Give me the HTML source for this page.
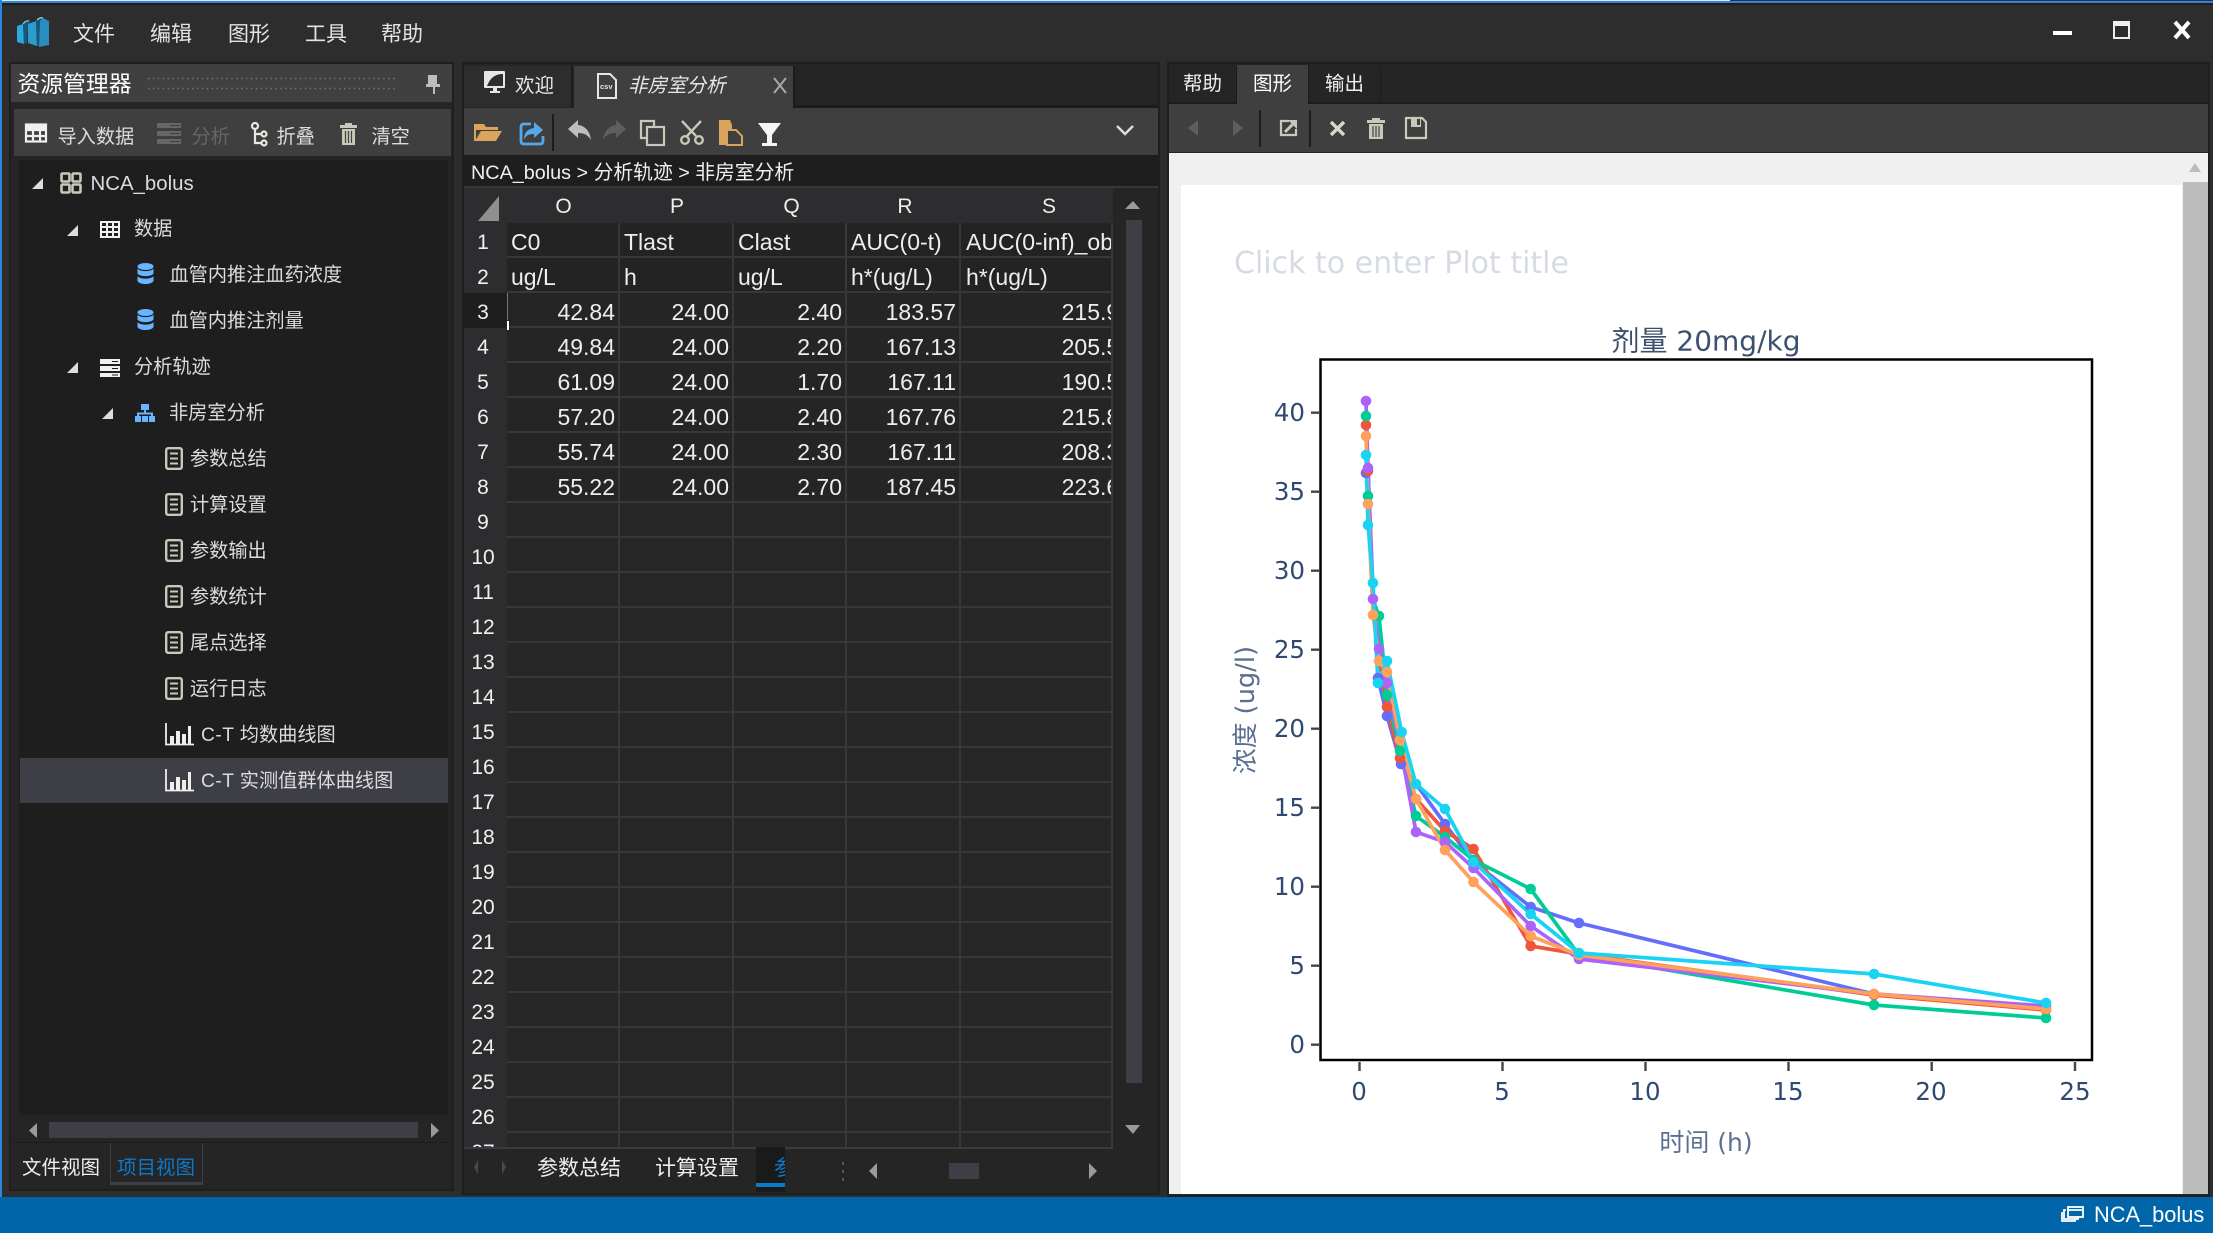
<!DOCTYPE html>
<html><head><meta charset="utf-8"><style>
*{box-sizing:border-box}
html,body{margin:0;padding:0;background:#2d2d2d}
body{width:2213px;height:1233px;position:relative;overflow:hidden;font-family:"Liberation Sans","Noto Sans CJK SC",sans-serif;color:#e6e6e6}
.b{position:absolute}
.t{position:absolute;white-space:nowrap;line-height:30px;height:30px}
.m{font-size:21px;color:#e4e4e4}
.n{font-size:19.200px;color:#dcdcdc}
.wrap{position:absolute;left:464px;top:188px;width:649px;height:959px;overflow:hidden;background:#272727}
table{border-collapse:separate;border-spacing:0;table-layout:fixed;width:649px;font-size:23px}
td{height:35px;padding:5px 4px 0 4px;border-right:2px solid #37373d;border-bottom:2px solid #37373d;background:#272727;color:#eee;white-space:nowrap;overflow:hidden;line-height:28px}
td.h{background:#2d2d30;border:0;text-align:center;padding:5px 5px 0 0;font-size:21px;color:#f0f0f0}
td.c{background:#2d2d30;border:0;text-align:center;padding:2px 0 0 0;font-size:21px;color:#eee}
td.f{background:#232323}
td.r{text-align:right;padding-right:3px;background:#252525}
td.clipcell{text-align:right;padding-right:0}
svg{position:absolute;left:0;top:0}
</style></head><body>
<!-- window frame -->
<div class="b" style="left:0;top:0;width:2213px;height:1px;background:#e8e8e8"></div>
<div class="b" style="left:1730px;top:0;width:483px;height:1px;background:#333"></div>
<div class="b" style="left:0;top:1px;width:2213px;height:2px;background:#2c85dd"></div>
<div class="b" style="left:0;top:3px;width:2213px;height:2px;background:#1e1e1e"></div>
<div class="b" style="left:0;top:0;width:2px;height:1233px;background:#2c85dd"></div>

<!-- menu -->
<div class="t m" style="left:73px;top:20px">文件</div>
<div class="t m" style="left:150px;top:20px">编辑</div>
<div class="t m" style="left:228px;top:20px">图形</div>
<div class="t m" style="left:305px;top:20px">工具</div>
<div class="t m" style="left:381px;top:20px">帮助</div>

<!-- left panel -->
<div class="b" style="left:9px;top:62px;width:445px;height:1129px;background:#252526;border:2px solid #1f1f1f"></div>
<div class="b" style="left:11px;top:64px;width:441px;height:38px;background:#404040"></div>
<div class="t" style="left:17.500px;top:69px;font-size:22.800px;color:#fff">资源管理器</div>
<div class="b" style="left:14px;top:109px;width:437px;height:47px;background:#3f3f3f"></div>
<div class="t n" style="left:57.500px;top:122.500px">导入数据</div>
<div class="t n" style="left:191.500px;top:122.500px;color:#666">分析</div>
<div class="t n" style="left:276.500px;top:122.500px">折叠</div>
<div class="t n" style="left:371.500px;top:122.500px">清空</div>
<div class="b" style="left:19px;top:160px;width:429px;height:955px;background:#1e1e1e"></div>
<div class="b" style="left:20px;top:758px;width:428px;height:45px;background:#3e3f46"></div>
<div class="t n" style="left:90.500px;top:168.500px;font-size:20.400px">NCA_bolus</div>
<div class="t n" style="left:134px;top:214.500px">数据</div>
<div class="t n" style="left:169.500px;top:260.500px">血管内推注血药浓度</div>
<div class="t n" style="left:169.500px;top:306.500px">血管内推注剂量</div>
<div class="t n" style="left:134px;top:352.500px">分析轨迹</div>
<div class="t n" style="left:169px;top:398.500px">非房室分析</div>
<div class="t n" style="left:190px;top:444.500px">参数总结</div>
<div class="t n" style="left:190px;top:490.500px">计算设置</div>
<div class="t n" style="left:190px;top:536.500px">参数输出</div>
<div class="t n" style="left:190px;top:582.500px">参数统计</div>
<div class="t n" style="left:190px;top:628.500px">尾点选择</div>
<div class="t n" style="left:190px;top:674.500px">运行日志</div>
<div class="t n" style="left:201px;top:720.500px"><span style="letter-spacing:.5px">C-T</span> 均数曲线图</div>
<div class="t n" style="left:201px;top:766.500px"><span style="letter-spacing:.5px">C-T</span> 实测值群体曲线图</div>
<div class="b" style="left:49px;top:1122px;width:369px;height:16px;background:#3e3f46"></div>
<div class="b" style="left:14px;top:1142px;width:437px;height:1px;background:#1b1b1b"></div>
<div class="t" style="left:22px;top:1152.500px;font-size:19.500px;color:#eee">文件视图</div>
<div class="b" style="left:110px;top:1143px;width:93px;height:42px;border:1px solid #3e3f46;border-top:0;border-bottom:3px solid #3e3f46"></div>
<div class="t" style="left:117px;top:1152.500px;font-size:19.500px;color:#0e78c9">项目视图</div>

<!-- center panel -->
<div class="b" style="left:462px;top:62px;width:698px;height:1133px;background:#252526;border:2px solid #1f1f1f"></div>
<div class="b" style="left:464px;top:66px;width:109px;height:41px;background:#2d2d2d;border-right:2px solid #1c1c1c"></div>
<div class="b" style="left:574px;top:66px;width:221px;height:42px;background:#3f3f3f;border-right:2px solid #1c1c1c"></div>
<div class="b" style="left:795px;top:105px;width:363px;height:3px;background:#1c1c1c"></div>
<div class="t" style="left:515px;top:70.500px;font-size:19.500px;color:#e6e6e6">欢迎</div>
<div class="t" style="left:628px;top:70.500px;font-size:19.500px;font-style:italic;color:#e6e6e6">非房室分析</div>
<div class="b" style="left:464px;top:108px;width:694px;height:47px;background:#3f3f3f"></div>
<div class="b" style="left:464px;top:155px;width:694px;height:31px;background:#1e1e1e"></div>
<div class="b" style="left:464px;top:186px;width:694px;height:2px;background:#35353a"></div>
<div class="t" style="left:471px;top:157.500px;font-size:19.800px;color:#f0f0f0">NCA_bolus &gt; 分析轨迹 &gt; 非房室分析</div>
<div class="wrap"><table>
<colgroup><col style="width:43px"><col style="width:113px"><col style="width:114px"><col style="width:113px"><col style="width:114px"><col style="width:152px"></colgroup>
<tr><td class="c"></td><td class="c">O</td><td class="c">P</td><td class="c" style="padding-left:2px">Q</td><td class="c" style="padding-left:2px">R</td><td class="c" style="padding-left:24px">S</td></tr>
<tr><td class="h">1</td><td class="f">C0</td><td class="f">Tlast</td><td class="f">Clast</td><td class="f">AUC(0-t)</td><td class="f" style="padding-left:5px">AUC(0-inf)_ob</td></tr>
<tr><td class="h">2</td><td class="f">ug/L</td><td class="f">h</td><td class="f">ug/L</td><td class="f">h*(ug/L)</td><td class="f" style="padding-left:5px">h*(ug/L)</td></tr>
<tr><td class="h" style="background:#1e1e1e">3</td><td class="r">42.84</td><td class="r">24.00</td><td class="r">2.40</td><td class="r">183.57</td><td class="r clipcell"><span style="position:relative;left:21px">215.97</span></td></tr>
<tr><td class="h">4</td><td class="r">49.84</td><td class="r">24.00</td><td class="r">2.20</td><td class="r">167.13</td><td class="r clipcell"><span style="position:relative;left:21px">205.54</span></td></tr>
<tr><td class="h">5</td><td class="r">61.09</td><td class="r">24.00</td><td class="r">1.70</td><td class="r">167.11</td><td class="r clipcell"><span style="position:relative;left:21px">190.52</span></td></tr>
<tr><td class="h">6</td><td class="r">57.20</td><td class="r">24.00</td><td class="r">2.40</td><td class="r">167.76</td><td class="r clipcell"><span style="position:relative;left:21px">215.86</span></td></tr>
<tr><td class="h">7</td><td class="r">55.74</td><td class="r">24.00</td><td class="r">2.30</td><td class="r">167.11</td><td class="r clipcell"><span style="position:relative;left:21px">208.31</span></td></tr>
<tr><td class="h">8</td><td class="r">55.22</td><td class="r">24.00</td><td class="r">2.70</td><td class="r">187.45</td><td class="r clipcell"><span style="position:relative;left:21px">223.65</span></td></tr>
<tr><td class="h">9</td><td></td><td></td><td></td><td></td><td></td></tr>
<tr><td class="h">10</td><td></td><td></td><td></td><td></td><td></td></tr>
<tr><td class="h">11</td><td></td><td></td><td></td><td></td><td></td></tr>
<tr><td class="h">12</td><td></td><td></td><td></td><td></td><td></td></tr>
<tr><td class="h">13</td><td></td><td></td><td></td><td></td><td></td></tr>
<tr><td class="h">14</td><td></td><td></td><td></td><td></td><td></td></tr>
<tr><td class="h">15</td><td></td><td></td><td></td><td></td><td></td></tr>
<tr><td class="h">16</td><td></td><td></td><td></td><td></td><td></td></tr>
<tr><td class="h">17</td><td></td><td></td><td></td><td></td><td></td></tr>
<tr><td class="h">18</td><td></td><td></td><td></td><td></td><td></td></tr>
<tr><td class="h">19</td><td></td><td></td><td></td><td></td><td></td></tr>
<tr><td class="h">20</td><td></td><td></td><td></td><td></td><td></td></tr>
<tr><td class="h">21</td><td></td><td></td><td></td><td></td><td></td></tr>
<tr><td class="h">22</td><td></td><td></td><td></td><td></td><td></td></tr>
<tr><td class="h">23</td><td></td><td></td><td></td><td></td><td></td></tr>
<tr><td class="h">24</td><td></td><td></td><td></td><td></td><td></td></tr>
<tr><td class="h">25</td><td></td><td></td><td></td><td></td><td></td></tr>
<tr><td class="h">26</td><td></td><td></td><td></td><td></td><td></td></tr>
<tr><td class="h">27</td><td></td><td></td><td></td><td></td><td></td></tr>
</table></div>
<div class="b" style="left:464px;top:1147px;width:649px;height:2px;background:#3a3a40"></div>
<div class="b" style="left:507px;top:293px;width:1px;height:30px;background:#6f7a8c"></div>
<div class="b" style="left:506px;top:320px;width:4px;height:11px;background:#fff;border:1px solid #222"></div>
<div class="b" style="left:1126px;top:220px;width:16px;height:863px;background:#3e3f46"></div>
<div class="t" style="left:537px;top:1154px;font-size:21px;color:#eee">参数总结</div>
<div class="t" style="left:655px;top:1154px;font-size:21px;color:#eee">计算设置</div>
<div class="b" style="left:756px;top:1147px;width:29px;height:45px;background:#1a1a1a;overflow:hidden">
  <div class="t" style="left:18px;top:7px;font-size:21px;color:#0e78c9">参数</div>
  <div class="b" style="left:0;top:36px;width:29px;height:4px;background:#0e78c9"></div>
</div>
<div class="b" style="left:949px;top:1163px;width:30px;height:16px;background:#3e3f46"></div>

<!-- right panel -->
<div class="b" style="left:1167px;top:62px;width:1043px;height:1135px;background:#252526;border:2px solid #1f1f1f"></div>
<div class="b" style="left:1237px;top:65px;width:71px;height:39px;background:#3f3f3f"></div>
<div class="b" style="left:1236px;top:65px;width:1px;height:38px;background:#1c1c1c"></div>
<div class="b" style="left:1308px;top:65px;width:1px;height:38px;background:#1c1c1c"></div>
<div class="b" style="left:1380px;top:65px;width:1px;height:38px;background:#1c1c1c"></div>
<div class="b" style="left:1169px;top:102px;width:68px;height:2px;background:#1c1c1c"></div>
<div class="b" style="left:1308px;top:102px;width:900px;height:2px;background:#1c1c1c"></div>
<div class="t" style="left:1183px;top:69px;font-size:19.500px;color:#eee">帮助</div>
<div class="t" style="left:1253px;top:69px;font-size:19.500px;color:#fff">图形</div>
<div class="t" style="left:1325px;top:69px;font-size:19.500px;color:#eee">输出</div>
<div class="b" style="left:1169px;top:104px;width:1039px;height:48px;background:#3f3f3f"></div>
<div class="b" style="left:1169px;top:153px;width:1039px;height:1041px;background:#f0f0f0"></div>
<div class="b" style="left:1181px;top:185px;width:1001px;height:1009px;background:#fff"></div>
<div class="b" style="left:2183px;top:182px;width:25px;height:1012px;background:#bcbcbc"></div>

<!-- status bar -->
<div class="b" style="left:0;top:1197px;width:2213px;height:36px;background:#0065a9"></div>
<div class="t" style="left:2094px;top:1200px;font-size:21.800px;color:#fff">NCA_bolus</div>

<svg width="2213" height="1233" viewBox="0 0 2213 1233" xmlns="http://www.w3.org/2000/svg">
<defs>
<g id="doc"><rect x="1.200" y="1.200" width="15.600" height="20.600" rx="2" fill="none" stroke="#c9c9b9" stroke-width="2.400"/><path d="M5 6.500h8M5 11.500h8M5 16.500h8" stroke="#c9c9b9" stroke-width="2"/></g>
<g id="bars"><path d="M1 0v21.500h28" fill="none" stroke="#eee" stroke-width="1.800"/><path d="M5 13h4v8H5zM11 8h4v13h-4zM17 11h4v10h-4zM23 3h3v18h-3z" fill="#eee"/></g>
<g id="cyl" fill="#66b5ff"><ellipse cx="8.500" cy="3.500" rx="8" ry="3.500"/><path d="M.5 5.500c2 3.500 14 3.500 16 0v5c-2 3.500-14 3.500-16 0z"/><path d="M.5 13c2 3.500 14 3.500 16 0v5c-2 4-14 4-16 0z"/></g>
</defs>
<!-- logo -->
<path d="M17 26l6-2 1 20-7-2z" fill="#2ba9e0"/>
<path d="M23 24q4-5 8-2l-3 2-1 19-3 1z" fill="#17577e"/>
<path d="M28 24l8-3 1 25-9-3z" fill="#2b9ccb"/>
<path d="M36 21q3-5 7-3l-3 3-1 25-2 0z" fill="#17577e"/>
<path d="M40 21l3-3 6 3v24l-10 2z" fill="#2a8dc0"/>
<path d="M23 24q3-4 6-3M37 20q3-3 6-2" fill="none" stroke="#8fd8ee" stroke-width="1.200"/>
<!-- window buttons -->
<rect x="2053" y="31" width="19" height="4" fill="#fff"/>
<rect x="2114" y="22" width="15" height="16" fill="none" stroke="#eee" stroke-width="2"/><rect x="2114" y="21" width="15" height="5" fill="#eee"/>
<path d="M2175 22l14 16M2189 22l-14 16" stroke="#fff" stroke-width="4"/>
<!-- left header -->
<path d="M148 78.500H397M148 88.500H397" stroke="#777" stroke-width="1.400" stroke-dasharray="1.400 3.500"/>
<path d="M428 75h9v9h3v3h-5v7h-2v-7h-7v-3h2z" fill="#bdbdbd"/>
<!-- left toolbar icons -->
<g fill="none" stroke="#f0f0f0" stroke-width="2.200"><rect x="26" y="124.500" width="20" height="17"/><path d="M26 130h20M26 136h20M33 125v16M40 125v16"/></g><rect x="26" y="124" width="21" height="5" fill="#f0f0f0"/>
<g fill="#666"><rect x="157" y="123" width="24" height="5"/><rect x="157" y="131" width="24" height="5"/><rect x="157" y="139" width="24" height="5"/></g>
<path d="M170 125.500h10M170 133.500h10M170 141.500h10" stroke="#3f3f3f" stroke-width="1"/>
<g fill="none" stroke="#e8e8e0" stroke-width="2.200"><circle cx="255" cy="126" r="3"/><circle cx="264" cy="134" r="2.500"/><circle cx="264" cy="143" r="2.500"/><path d="M255 129v14h7M255 134h7"/></g>
<g fill="#c9c9b9"><path d="M345 123h7v2h5v3h-17v-3h5zM342 129h13v16h-13z"/></g><path d="M345.500 131v12M348.500 131v12M351.500 131v12" stroke="#3f3f3f" stroke-width="1.200"/>
<!-- tree arrows -->
<path d="M43 178v11H32z" fill="#ddd"/><path d="M78 225v11H67z" fill="#ddd"/><path d="M78 362v11H67z" fill="#ddd"/><path d="M113 408v11h-11z" fill="#ddd"/>
<!-- tree icons -->
<g fill="none" stroke="#c9c9b9" stroke-width="2.600"><rect x="61.500" y="173.500" width="8" height="8" rx="1"/><rect x="72.500" y="173.500" width="8" height="8" rx="1"/><rect x="61.500" y="184.500" width="8" height="8" rx="1"/><rect x="72.500" y="184.500" width="8" height="8" rx="1"/></g>
<g fill="none" stroke="#f0f0f0" stroke-width="2"><rect x="101" y="222" width="18" height="15"/><path d="M101 227h18M101 232h18M107 222v15M113 222v15"/></g>
<use href="#cyl" x="137" y="263"/><use href="#cyl" x="137" y="309"/>
<g fill="#f0f0f0"><rect x="100" y="359" width="20" height="5"/><rect x="100" y="366" width="20" height="5"/><rect x="100" y="373" width="20" height="4"/></g><path d="M112 361.500h6M112 368.500h6M112 375h6" stroke="#1e1e1e" stroke-width="1"/>
<g fill="#66b5ff"><rect x="141" y="404" width="8" height="6"/><rect x="135" y="416" width="6" height="6"/><rect x="142" y="416" width="6" height="6"/><rect x="149" y="416" width="6" height="6"/></g><path d="M145 410v4M138 416v-2.500h14v2.500" fill="none" stroke="#66b5ff" stroke-width="2"/>
<use href="#doc" x="165" y="447"/><use href="#doc" x="165" y="493"/><use href="#doc" x="165" y="539"/><use href="#doc" x="165" y="585"/><use href="#doc" x="165" y="631"/><use href="#doc" x="165" y="677"/>
<use href="#bars" x="165" y="723"/><use href="#bars" x="165" y="769"/>
<!-- left scroll arrows -->
<path d="M37 1123l-8 7.500 8 7.500z" fill="#9a9a9a"/><path d="M431 1123l8 7.500-8 7.500z" fill="#9a9a9a"/>
<!-- center tabs icons -->
<rect x="484" y="71" width="21" height="17" rx="1" fill="#e6e6e6"/><path d="M487 86c4-10 10-12 16-12v12z" fill="#2d2d2d"/><path d="M490 91h10v2h-10zM493 88h4v3h-4z" fill="#e6e6e6"/>
<path d="M598 74h12l6 6v18h-18z" fill="none" stroke="#e6e6e6" stroke-width="2"/><text x="600" y="89" font-size="7.500" font-weight="bold" fill="#e6e6e6" font-family="Liberation Sans,sans-serif">csv</text>
<path d="M774 78l12 15M786 78l-12 15" stroke="#a8a8a8" stroke-width="2"/>
<!-- center toolbar icons -->
<path d="M475 124h9l2 3h12v3h-23z" fill="#d9a55c"/><path d="M475 141l6-10h21l-6 10z" fill="#d9a55c"/><path d="M475 124v17" stroke="#d9a55c" stroke-width="2"/>
<path d="M531 124h-7q-3 0-3 3v14q0 3 3 3h16q3 0 3-3v-5" fill="none" stroke="#56a8ec" stroke-width="2.800"/><path d="M534 122l9 8-9 8v-4c-5 0-8 1-10 6 0-8 4-11 10-12z" fill="#56a8ec"/>
<rect x="552" y="114" width="2" height="37" fill="#1c1c1c"/>
<path d="M578 120l-10 9 10 9v-5c6 0 10 2 13 7-1-8-5-14-13-15z" fill="#bdbdbd"/>
<path d="M616 120l10 9-10 9v-5c-6 0-10 2-13 7 1-8 5-14 13-15z" fill="#5e5e5e"/>
<g fill="none" stroke="#c9c9b9" stroke-width="2.200"><path d="M647 138h-6v-17h13v5"/><rect x="647" y="127" width="17" height="18"/></g>
<g fill="none" stroke="#c9c9b9" stroke-width="2.400"><path d="M682 121l14 15M701 121l-14 15"/><circle cx="685" cy="140" r="3.800"/><circle cx="699" cy="140" r="3.800"/></g>
<path d="M719 125v-5h11l2 5v4h-6v16h-7z" fill="#d9a55c"/><path d="M727 130h9l6 6v9h-15z" fill="#3f3f3f" stroke="#d9a55c" stroke-width="2"/>
<path d="M758 123h23l-9 12v8h5v3h-15v-3h5v-8z" fill="#f4f4f4"/>
<path d="M1117 126l8 8 8-8" fill="none" stroke="#ddd" stroke-width="2.500"/>
<!-- grid extras -->
<path d="M499 196v25h-21z" fill="#8f8f8f"/>
<path d="M1133 201l7 8h-15z" fill="#9a9a9a"/><path d="M1133 1134l7-9h-15z" fill="#9a9a9a"/>
<path d="M478 1160l-4 7 4 7zM502 1160l4 7-4 7z" fill="#444b55"/>
<path d="M842 1162h2v3h-2zM842 1170h2v3h-2zM842 1178h2v3h-2z" fill="#555"/>
<path d="M877 1163l-8 8 8 8z" fill="#9a9a9a"/><path d="M1089 1163l8 8-8 8z" fill="#9a9a9a"/>
<!-- right toolbar icons -->
<path d="M1198 120l-10 8 10 8z" fill="#5e5e5e"/><path d="M1233 120l10 8-10 8z" fill="#5e5e5e"/>
<rect x="1259" y="110" width="2" height="37" fill="#1c1c1c"/><rect x="1309" y="110" width="2" height="37" fill="#1c1c1c"/>
<path d="M1289 121h-8v14h15v-6" fill="none" stroke="#c9c9b9" stroke-width="2.200"/><path d="M1285 132l8-8" stroke="#c9c9b9" stroke-width="3"/><path d="M1288 120h9v9z" fill="#c9c9b9"/>
<path d="M1331 122l13 13M1344 122l-13 13" stroke="#d8d8c8" stroke-width="3.400"/>
<path d="M1372 118h8v2h5v3h-18v-3h5zM1369 124h14v15h-14z" fill="#c9c9b9"/><path d="M1373 126v11M1376 126v11M1379 126v11" stroke="#3f3f3f" stroke-width="1.200"/>
<path d="M1406 118h16l4 4v16h-20z" fill="none" stroke="#c9c9b9" stroke-width="2.200"/><path d="M1411 118h10v9h-10z" fill="#c9c9b9"/><rect x="1417" y="119" width="3" height="6" fill="#3f3f3f"/>
<path d="M2195 163l6 9h-12z" fill="#bcbcbc"/>
<!-- status icon -->
<g fill="none" stroke="#fff" stroke-width="1.800"><rect x="2068" y="1207" width="15" height="10"/><path d="M2068 1210h15M2066 1210h-2v9h14v-2M2063 1213h-1v8h13v-2"/></g>

<!-- chart -->
<g font-family="DejaVu Sans,Noto Sans CJK SC,sans-serif">
<text x="1234" y="273" font-size="30" fill="#d6dbe3">Click to enter Plot title</text>
<text x="1706" y="350.500" font-size="28" fill="#3c5170" text-anchor="middle">剂量 20mg/kg</text>
<rect x="1320.500" y="359.500" width="771.500" height="700.500" fill="#fff" stroke="#000" stroke-width="2.500"/>
<g stroke="#444" stroke-width="2.400"><path d="M1311 412.700h8M1311 491.700h8M1311 570.700h8M1311 649.700h8M1311 728.700h8M1311 807.700h8M1311 886.700h8M1311 965.700h8M1311 1044.700h8"/><path d="M1359.500 1062v9M1502.500 1062v9M1645.500 1062v9M1788.500 1062v9M1931.700 1062v9M2075 1062v9"/></g>
<g font-size="24.500" fill="#2f4a70" text-anchor="end"><text x="1305" y="421">40</text><text x="1305" y="500">35</text><text x="1305" y="579">30</text><text x="1305" y="658">25</text><text x="1305" y="737">20</text><text x="1305" y="816">15</text><text x="1305" y="895">10</text><text x="1305" y="974">5</text><text x="1305" y="1053">0</text></g>
<g font-size="24.500" fill="#2f4a70" text-anchor="middle"><text x="1359" y="1100">0</text><text x="1502" y="1100">5</text><text x="1645" y="1100">10</text><text x="1788" y="1100">15</text><text x="1931" y="1100">20</text><text x="2075" y="1100">25</text></g>
<text x="1706" y="1151" font-size="25" fill="#5a7090" text-anchor="middle">时间 (h)</text>
<text x="0" y="0" font-size="25.700" fill="#5a7090" text-anchor="middle" transform="translate(1254 710) rotate(-90)">浓度 (ug/l)</text>
</g>
<g fill="none" stroke-width="3.700" stroke-linejoin="round">
<polyline stroke="#636efa" points="1366,473 1368,470 1373,590 1378,678 1387,716 1401,764 1416,784 1445,824 1473.500,862 1530.700,907 1579,923 1874,994 2046,1007"/>
<polyline stroke="#ef553b" points="1366,425 1368,471 1373,605 1379,655 1387,707 1400,758 1416,799 1445,831 1473.500,849 1530.700,946 1579,954 1874,995 2046,1010"/>
<polyline stroke="#00cc96" points="1366,416 1368,496 1373,600 1379,616 1387,695 1400,751 1416,816 1445,837 1473.500,860 1530.700,889 1579,955 1874,1005 2046,1018"/>
<polyline stroke="#ab63fa" points="1366,401 1368,468 1373,599 1379,649 1387,683 1400,745 1416,832 1445,842 1473.500,868 1530.700,926 1579,959 1874,994 2046,1006"/>
<polyline stroke="#ffa15a" points="1366,436 1368,504 1373,615 1379,661 1387,672 1400,740 1416,799 1445,850 1473.500,882 1530.700,936 1579,955 1874,994 2046,1009"/>
<polyline stroke="#19d3f3" points="1366,455 1368,525 1373,583 1378,683 1387,661 1401.700,732 1416,784 1445,809 1473.500,862 1530.700,914 1579,953 1874,974 2046,1003"/>
</g>
<g fill="#636efa"><circle cx="1366" cy="473" r="5.300"/><circle cx="1378" cy="678" r="5.300"/><circle cx="1387" cy="716" r="5.300"/><circle cx="1401" cy="764" r="5.300"/><circle cx="1445" cy="824" r="5.300"/><circle cx="1473.500" cy="862" r="5.300"/><circle cx="1530.700" cy="907" r="5.300"/><circle cx="1579" cy="923" r="5.300"/><circle cx="1874" cy="994" r="5.300"/><circle cx="2046" cy="1007" r="5.300"/></g>
<g fill="#ef553b"><circle cx="1366" cy="425" r="5.300"/><circle cx="1368" cy="471" r="5.300"/><circle cx="1387" cy="707" r="5.300"/><circle cx="1400" cy="758" r="5.300"/><circle cx="1416" cy="799" r="5.300"/><circle cx="1445" cy="831" r="5.300"/><circle cx="1473.500" cy="849" r="5.300"/><circle cx="1530.700" cy="946" r="5.300"/><circle cx="1874" cy="995" r="5.300"/><circle cx="2046" cy="1010" r="5.300"/></g>
<g fill="#00cc96"><circle cx="1366" cy="416" r="5.300"/><circle cx="1368" cy="496" r="5.300"/><circle cx="1379" cy="616" r="5.300"/><circle cx="1387" cy="695" r="5.300"/><circle cx="1400" cy="751" r="5.300"/><circle cx="1416" cy="816" r="5.300"/><circle cx="1445" cy="837" r="5.300"/><circle cx="1473.500" cy="860" r="5.300"/><circle cx="1530.700" cy="889" r="5.300"/><circle cx="1874" cy="1005" r="5.300"/><circle cx="2046" cy="1018" r="5.300"/></g>
<g fill="#ab63fa"><circle cx="1366" cy="401" r="5.300"/><circle cx="1368" cy="468" r="5.300"/><circle cx="1373" cy="599" r="5.300"/><circle cx="1379" cy="649" r="5.300"/><circle cx="1387" cy="683" r="5.300"/><circle cx="1416" cy="832" r="5.300"/><circle cx="1445" cy="842" r="5.300"/><circle cx="1473.500" cy="868" r="5.300"/><circle cx="1530.700" cy="926" r="5.300"/><circle cx="1579" cy="959" r="5.300"/><circle cx="2046" cy="1006" r="5.300"/></g>
<g fill="#ffa15a"><circle cx="1366" cy="436" r="5.300"/><circle cx="1368" cy="504" r="5.300"/><circle cx="1373" cy="615" r="5.300"/><circle cx="1379" cy="661" r="5.300"/><circle cx="1387" cy="672" r="5.300"/><circle cx="1400" cy="740" r="5.300"/><circle cx="1416" cy="799" r="5.300"/><circle cx="1445" cy="850" r="5.300"/><circle cx="1473.500" cy="882" r="5.300"/><circle cx="1530.700" cy="936" r="5.300"/><circle cx="1579" cy="955" r="5.300"/><circle cx="1874" cy="994" r="5.300"/><circle cx="2046" cy="1009" r="5.300"/></g>
<g fill="#19d3f3"><circle cx="1366" cy="455" r="5.300"/><circle cx="1368" cy="525" r="5.300"/><circle cx="1373" cy="583" r="5.300"/><circle cx="1378" cy="683" r="5.300"/><circle cx="1387" cy="661" r="5.300"/><circle cx="1401.700" cy="732" r="5.300"/><circle cx="1416" cy="784" r="5.300"/><circle cx="1445" cy="809" r="5.300"/><circle cx="1473.500" cy="862" r="5.300"/><circle cx="1530.700" cy="914" r="5.300"/><circle cx="1579" cy="953" r="5.300"/><circle cx="1874" cy="974" r="5.300"/><circle cx="2046" cy="1003" r="5.300"/></g>
</svg>
</body></html>
